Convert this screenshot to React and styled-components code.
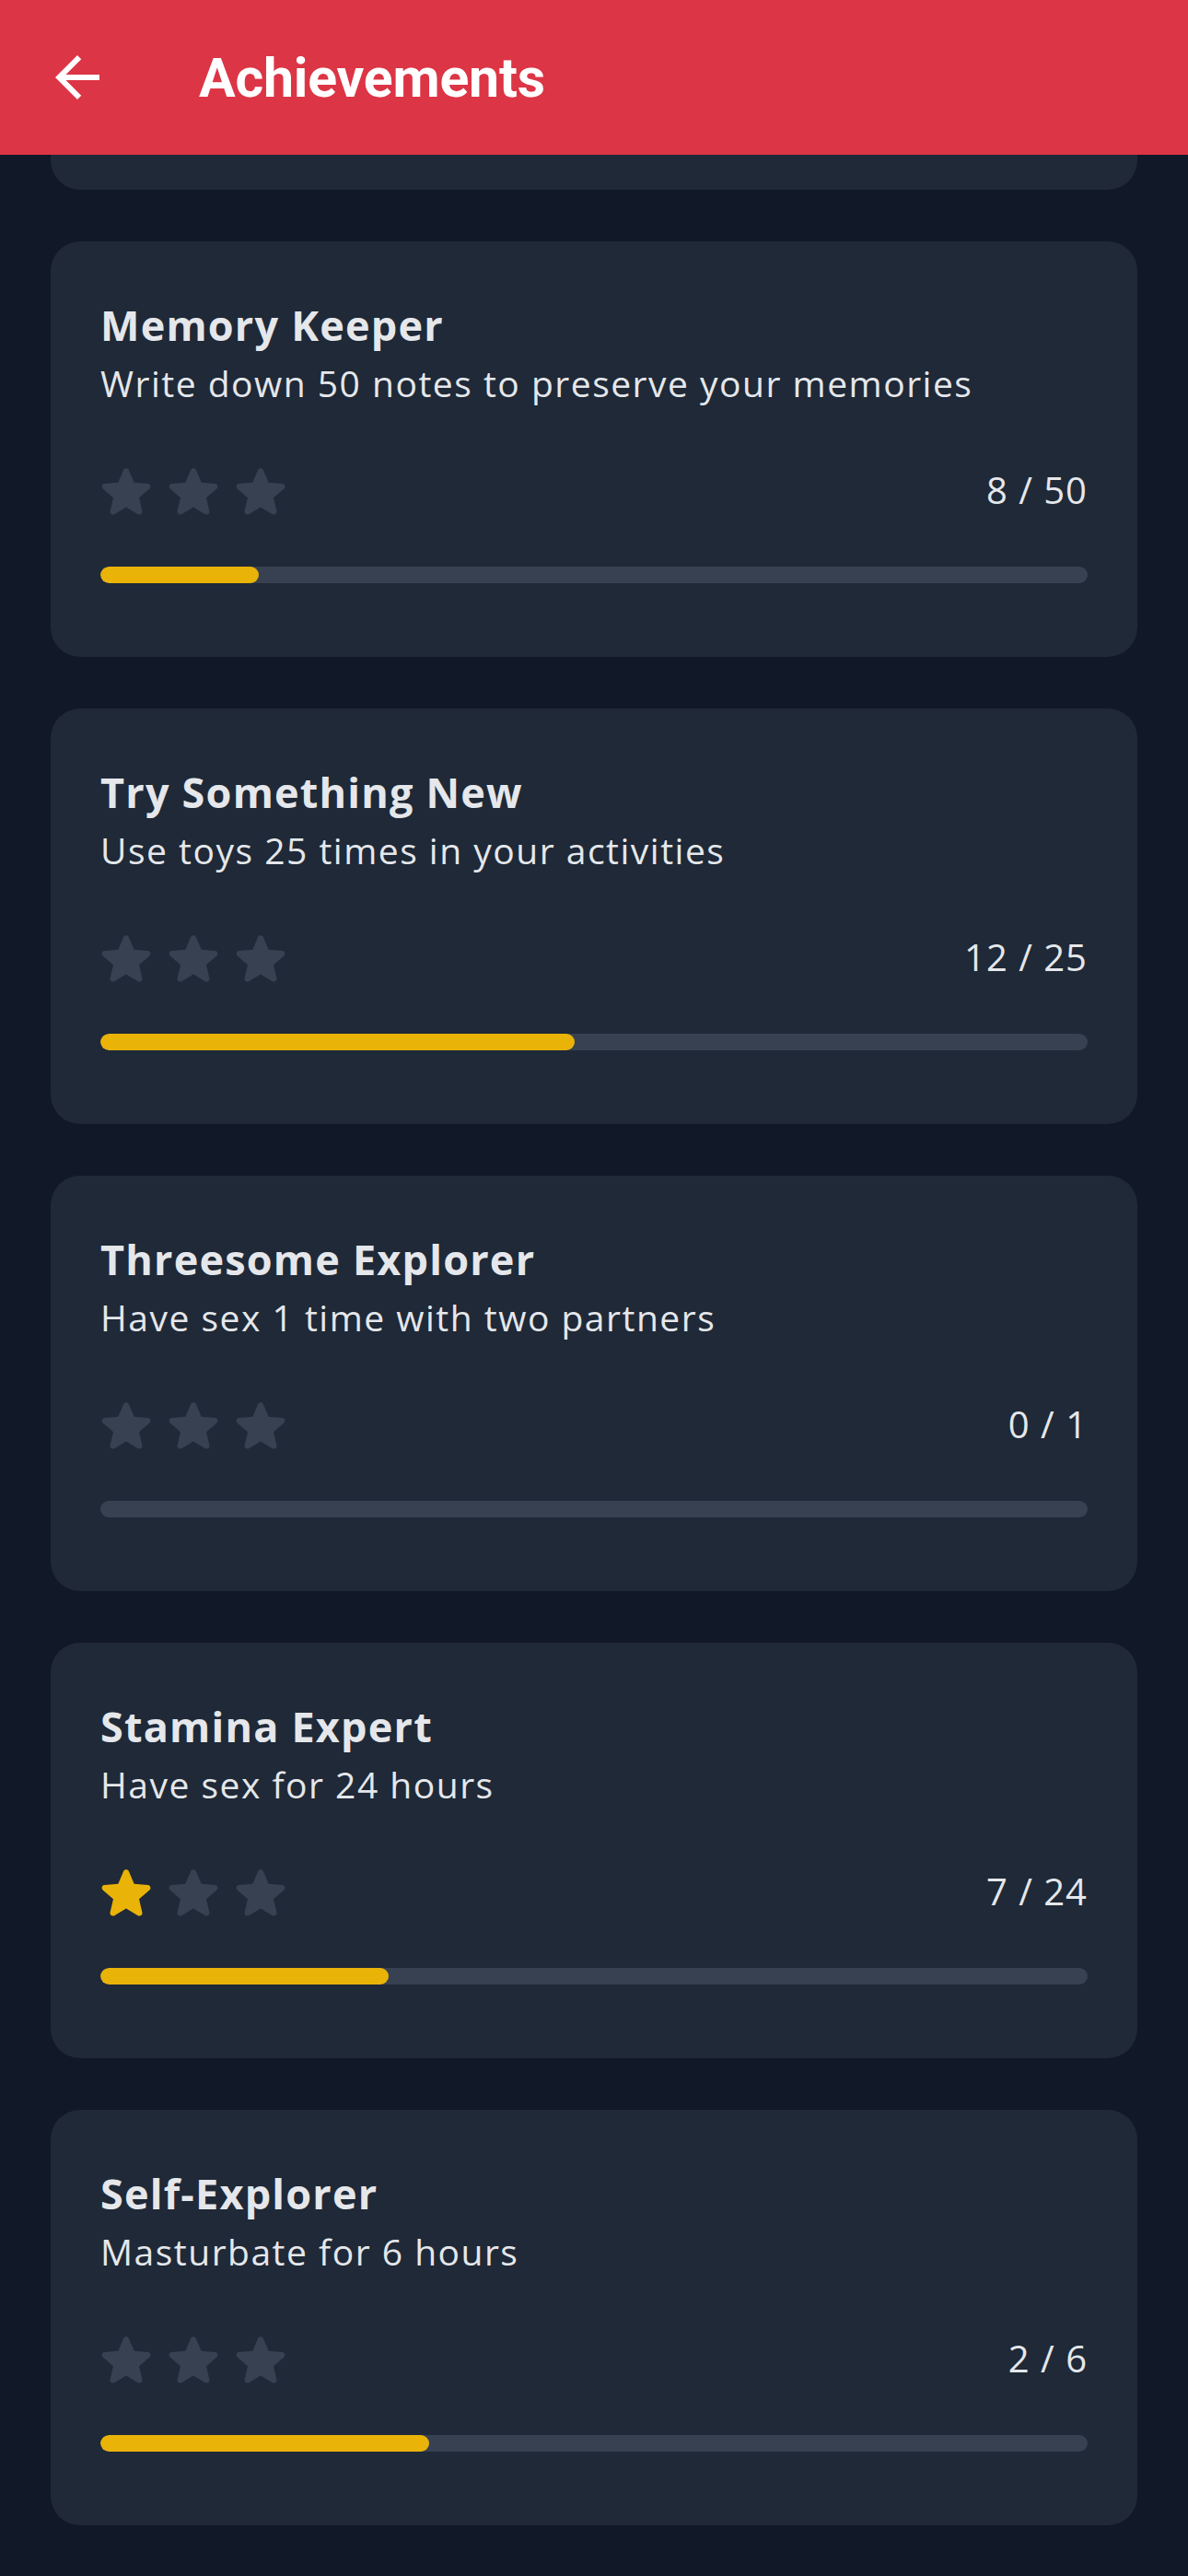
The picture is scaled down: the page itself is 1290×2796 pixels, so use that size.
import React, { useLayoutEffect, useRef } from "react";
import styled, { createGlobalStyle } from "styled-components";

const GlobalStyle = createGlobalStyle`
  html, body {
    margin: 0;
    padding: 0;
    background: #111827;
  }
  * {
    box-sizing: border-box;
  }
`;

const achievements = [
  { id: "first", title: "First Steps", description: "Log your very first activity", current: 1, target: 1, stars: 1 },
  { id: "notes", title: "Memory Keeper", description: "Write down 50 notes to preserve your memories", current: 8, target: 50, stars: 0 },
  { id: "toys", title: "Try Something New", description: "Use toys 25 times in your activities", current: 12, target: 25, stars: 0 },
  { id: "three", title: "Threesome Explorer", description: "Have sex 1 time with two partners", current: 0, target: 1, stars: 0 },
  { id: "stamina", title: "Stamina Expert", description: "Have sex for 24 hours", current: 7, target: 24, stars: 1 },
  { id: "self", title: "Self-Explorer", description: "Masturbate for 6 hours", current: 2, target: 6, stars: 0 },
];

const BackIcon = () => (
  <svg width="72" height="72" viewBox="0 0 24 24" fill="#fff">
    <path d="M20 11H7.83l5.59-5.59L12 4l-8 8 8 8 1.41-1.41L7.83 13H20v-2z" />
  </svg>
);

const StarIcon = ({ earned }) => (
  <svg width="56" height="54" viewBox="3.45 2.55 17.1 17.5">
    <path
      fill={earned ? "#eab308" : "#374151"}
      d="M12 17.27l4.15 2.51c.76.46 1.69-.22 1.49-1.08l-1.1-4.72 3.67-3.18c.67-.58.31-1.68-.57-1.75l-4.83-.41-1.89-4.46c-.34-.81-1.5-.81-1.84 0L9.19 8.63l-4.83.41c-.88.07-1.24 1.17-.57 1.75l3.67 3.18-1.1 4.72c-.2.86.73 1.54 1.49 1.08l4.15-2.5z"
    />
  </svg>
);

const AchievementCard = ({ item }) => {
  const percent = item.target ? (item.current / item.target) * 100 : 0;
  return (
    <Card>
      <Title>{item.title}</Title>
      <Description>{item.description}</Description>
      <StatusRow>
        <Stars>
          {[0, 1, 2].map((i) => (
            <StarIcon key={i} earned={i < item.stars} />
          ))}
        </Stars>
        <Count>
          {item.current} / {item.target}
        </Count>
      </StatusRow>
      <Track>
        <Fill style={{ width: `${percent}%` }} />
      </Track>
    </Card>
  );
};

export default function App() {
  const listRef = useRef(null);

  // the list opens scrolled to its end
  useLayoutEffect(() => {
    const el = listRef.current;
    if (el) el.scrollTop = el.scrollHeight;
  }, []);

  return (
    <Screen>
      <GlobalStyle />
      <Header>
        <BackButton aria-label="Back">
          <BackIcon />
        </BackButton>
        <HeaderTitle>Achievements</HeaderTitle>
      </Header>
      <List ref={listRef}>
        {achievements.map((item) => (
          <AchievementCard key={item.id} item={item} />
        ))}
      </List>
    </Screen>
  );
}

const Screen = styled.div`
  display: flex;
  flex-direction: column;
  height: 100vh;
  background: #111827;
  overflow: hidden;
`;

const Header = styled.header`
  flex: none;
  height: 168px;
  display: flex;
  align-items: center;
  padding-left: 48px;
  gap: 96px;
  background: #dc3545;
  position: relative;
  z-index: 2;
`;

const BackButton = styled.button`
  display: flex;
  align-items: center;
  justify-content: center;
  width: 72px;
  height: 72px;
  padding: 0;
  border: none;
  background: none;
  cursor: pointer;
`;

const HeaderTitle = styled.h1`
  margin: 0;
  font-family: Roboto, "Liberation Sans", sans-serif;
  font-weight: 700;
  font-size: 59px;
  line-height: 1;
  color: #fff;
  letter-spacing: -0.2px;
`;

const List = styled.main`
  flex: 1;
  overflow-y: auto;
  scrollbar-width: none;
  display: flex;
  flex-direction: column;
  gap: 56px;
  padding: 56px 55px 55px;

  &::-webkit-scrollbar {
    display: none;
  }
`;

const Card = styled.section`
  flex: none;
  height: 451px;
  background: #1f2937;
  border-radius: 32px;
  padding: 61px 54px 0;
  font-family: "Open Sans", "Noto Sans", sans-serif;
  color: #e5e7eb;
`;

const Title = styled.h2`
  margin: 0;
  font-size: 45px;
  line-height: 60px;
  font-weight: 700;
  letter-spacing: 1.2px;
`;

const Description = styled.p`
  margin: 7px 0 0;
  font-size: 39px;
  line-height: 52px;
  font-weight: 400;
  letter-spacing: 1.5px;
`;

const StatusRow = styled.div`
  display: flex;
  align-items: center;
  justify-content: space-between;
  margin-top: 63px;
  height: 54px;
`;

const Stars = styled.div`
  display: flex;
  gap: 17px;
`;

const Count = styled.span`
  font-size: 40px;
  line-height: 1;
  letter-spacing: 1px;
`;

const Track = styled.div`
  margin-top: 56px;
  height: 18px;
  border-radius: 9px;
  background: #374151;
  overflow: hidden;
`;

const Fill = styled.div`
  height: 100%;
  border-radius: 9px;
  background: #eab308;
`;
